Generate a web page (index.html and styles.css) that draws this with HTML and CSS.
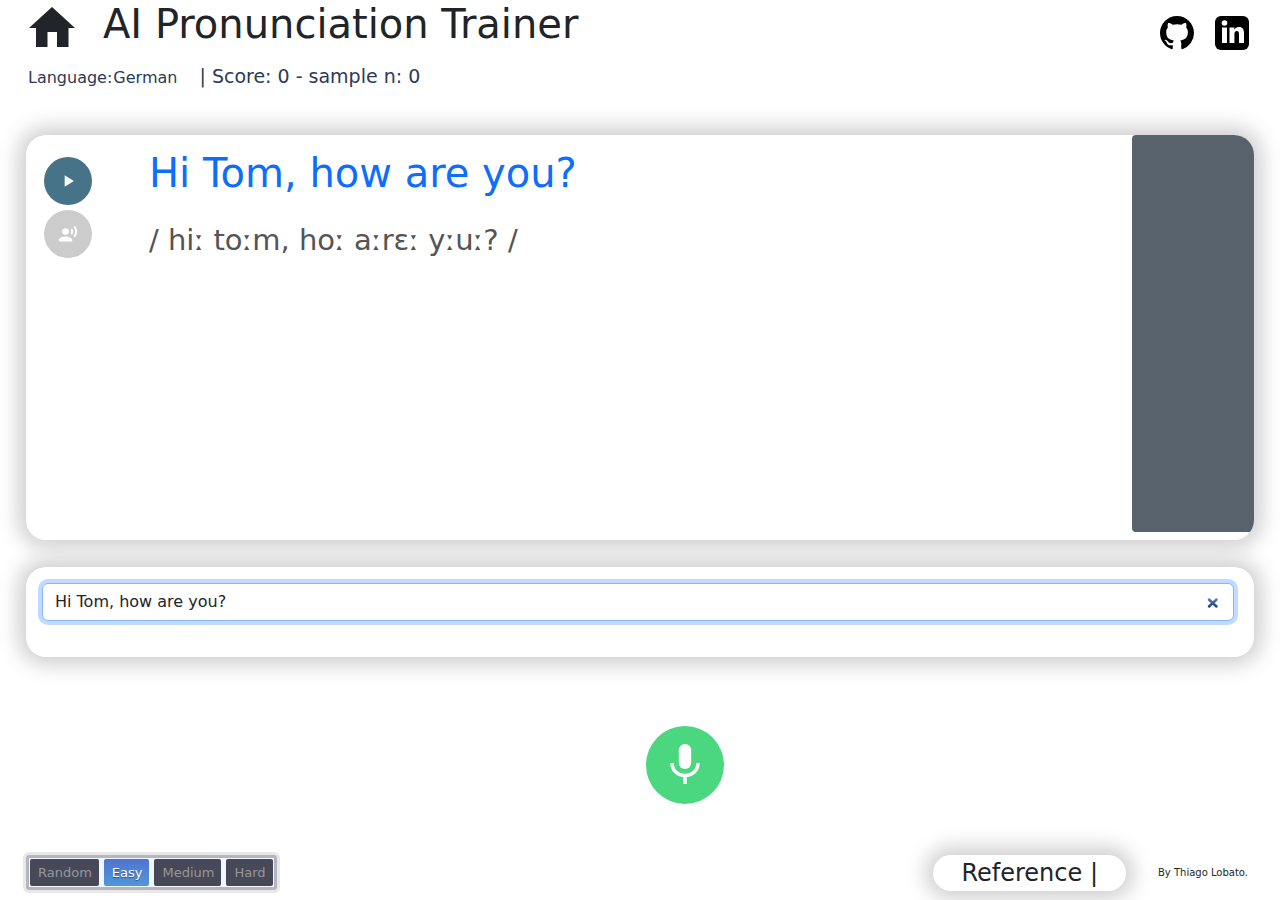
FILE: index.html
```html
<!DOCTYPE html>
<html lang="en">
<head>
<meta charset="utf-8">
<meta name="viewport" content="width=device-width, initial-scale=1">
<title>AI Pronunciation Trainer</title>
<link rel="stylesheet" href="styles.css">
</head>
<body>
<header class="header">
  <div class="title-row">
    <a class="home" href="#" aria-label="Home"><svg viewBox="0 0 46 40" width="46" height="40"><path d="M23 0 46 21H39.500V40H28V25H18.500V40H7V21H0Z"/></svg></a>
    <h1 class="title">AI Pronunciation Trainer</h1>
    <nav class="links">
      <a href="#" aria-label="GitHub"><svg viewBox="0 0 24 24" width="34" height="34"><path d="M12 0C5.370 0 0 5.370 0 12c0 5.310 3.435 9.795 8.205 11.385.6.105.825-.255.825-.57 0-.285-.015-1.230-.015-2.235-3.015.555-3.795-.735-4.035-1.410-.135-.345-.72-1.410-1.230-1.695-.42-.225-1.020-.78-.015-.795.945-.015 1.620.87 1.845 1.230 1.080 1.815 2.805 1.305 3.495.99.105-.78.42-1.305.765-1.605-2.670-.3-5.460-1.335-5.460-5.925 0-1.305.465-2.385 1.230-3.225-.12-.3-.54-1.530.12-3.180 0 0 1.005-.315 3.300 1.230.96-.27 1.980-.405 3-.405s2.040.135 3 .405c2.295-1.560 3.300-1.230 3.300-1.230.66 1.650.24 2.880.12 3.180.765.84 1.230 1.905 1.230 3.225 0 4.605-2.805 5.625-5.475 5.925.435.375.81 1.095.81 2.220 0 1.605-.015 2.895-.015 3.300 0 .315.225.69.825.57A12.020 12.020 0 0 0 24 12c0-6.630-5.370-12-12-12z"/></svg></a>
      <a href="#" aria-label="LinkedIn"><svg viewBox="0 0 34 34" width="34" height="34"><rect width="34" height="34" rx="6"/><g fill="#fff"><circle cx="9.500" cy="7" r="2.800"/><path d="M7 11.500h5V27H7zM14.500 11.500h4.800v2.200c.9-1.600 2.500-2.600 4.600-2.600 4 0 5.100 2.700 5.100 6.300V27h-5v-8.500c0-2-.3-3.500-2.100-3.500-1.900 0-2.500 1.500-2.500 3.500V27h-4.900z"/></g></svg></a>
    </nav>
  </div>
  <div class="status">
    <span>Language:</span><button class="language" type="button">German</button>
    <span class="score">| Score: 0 - sample n: 0</span>
  </div>
</header>
<main class="main">
  <section class="card practice">
    <div class="actions">
      <button class="round play" type="button" aria-label="Play reference"><svg viewBox="0 0 24 24" width="20" height="20"><path d="M8 5v14l11-7z"/></svg></button>
      <button class="round voice" type="button" aria-label="Play recording" disabled><svg viewBox="0 0 24 24" width="20" height="20"><circle cx="9" cy="9" r="4"/><path d="M9 15c-2.670 0-8 1.340-8 4v2h16v-2c0-2.660-5.330-4-8-4zM16.760 5.360l-1.680 1.690c.84 1.180.84 2.710 0 3.890l1.680 1.690c2.020-2.020 2.020-5.070 0-7.270zM20.070 2l-1.630 1.630c2.770 3.020 2.770 7.560 0 10.740L20.070 16c3.900-3.890 3.910-9.950 0-14z"/></svg></button>
    </div>
    <div class="texts">
      <p class="sentence">Hi Tom, how are you?</p>
      <p class="ipa">/ hiː toːm, hoː aːrɛː yːuː? /</p>
    </div>
    <button class="next" type="button" aria-label="Next sample"></button>
  </section>
  <section class="card entry">
    <div class="field">
      <input class="input" type="text" value="Hi Tom, how are you?" aria-label="Sentence">
      <button class="clear" type="button" aria-label="Clear"><svg viewBox="0 0 12 12" width="12" height="12"><defs><linearGradient id="ink" x1="0" y1="0" x2="0" y2="1"><stop offset="0" stop-color="#4a78c0"/><stop offset="1" stop-color="#24407f"/></linearGradient></defs><path d="M2 2.500l7.500 7M9.500 2.500l-7.500 7"/></svg></button>
    </div>
  </section>
  <button class="mic" type="button" aria-label="Record"><svg viewBox="0 0 32 42" width="32" height="42"><rect x="9.800" y="0" width="12.400" height="25" rx="6.200"/><path class="stroke" d="M3 19c0 7.500 5.800 12.500 13 12.500S29 26.500 29 19M16 31.500V40"/></svg></button>
</main>
<footer class="footer">
  <fieldset class="levels" aria-label="Difficulty">
    <label class="level"><input type="radio" name="level"><span>Random</span></label>
    <label class="level"><input type="radio" name="level" checked><span>Easy</span></label>
    <label class="level"><input type="radio" name="level"><span>Medium</span></label>
    <label class="level"><input type="radio" name="level"><span>Hard</span></label>
  </fieldset>
  <div class="credits">
    <a class="reference" href="#">Reference |</a>
    <span class="author">By Thiago Lobato.</span>
  </div>
</footer>
</body>
</html>
```
FILE: styles.css
```css
* { box-sizing: border-box; }
body {
  margin: 0;
  min-height: 100vh;
  display: flex;
  flex-direction: column;
  padding: 0 26px 9px;
  background: #fff;
  color: #212529;
  font: 16px/24px "DejaVu Sans", sans-serif;
}
button { border: 0; padding: 0; font: inherit; color: inherit; cursor: pointer; }
h1, p { margin: 0; font-weight: 400; }
svg { display: block; }

.title-row { display: flex; align-items: flex-start; }
.home { margin: 7px 28px 0 3px; fill: #212529; }
.title { font-size: 40px; line-height: 48px; }
.links { display: flex; gap: 21px; margin: 16px 5px 0 auto; }
.status { display: flex; align-items: baseline; margin-top: 14px; padding-left: 2px; color: #2b3b56; }
.language { background: none; margin-left: 1px; }
.score { margin-left: 22px; font-size: 19px; }

.main { flex: 1; display: flex; flex-direction: column; gap: 27px; margin-top: 45px; }
.card { background: #fff; border-radius: 20px; box-shadow: 0 0 20px 8px #d0d0d0; }
.practice { display: flex; min-height: 405px; overflow: hidden; }
.actions { display: flex; flex-direction: column; gap: 5px; padding: 22px 0 0 18px; }
.round { display: grid; place-items: center; width: 48px; height: 48px; border-radius: 50%; fill: #fff; }
.play { background: #467387; }
.voice { background: #ccc; }
.texts { flex: 1; padding: 14px 0 0 57px; }
.sentence { font-size: 40px; line-height: 48px; color: #0d6efd; }
.ipa { margin-top: 23px; font-size: 29px; line-height: 40px; color: #555; }
.next { width: 122px; margin-bottom: 8px; border-radius: 4px; background: #58626c; }

.entry { min-height: 90px; padding: 16px 20px 0 16px; }
.field { position: relative; }
.input {
  display: block;
  width: 100%;
  height: 38px;
  padding: 0 40px 2px 12px;
  border: 1px solid #86b7fe;
  border-radius: 6px;
  outline: 0;
  box-shadow: 0 0 0 4px #c2daff;
  font: inherit;
  color: #212529;
}
.clear { position: absolute; top: 14px; right: 15px; background: none; }
.clear svg { fill: none; stroke: url(#ink); stroke-width: 2.500; stroke-linecap: round; }

.mic { display: grid; place-items: center; align-self: center; width: 78px; height: 78px; margin: 42px 0 0 90px; border-radius: 50%; background: #4bd77f; fill: #fff; }
.mic .stroke { fill: none; stroke: #fff; stroke-width: 3.500; }

.footer { display: flex; align-items: center; justify-content: space-between; }
.levels {
  display: flex;
  gap: 5px;
  margin: 0 0 1px;
  padding: 1px;
  border: 3px solid #b5b5bf;
  border-radius: 3px;
  background: #f4f6ff;
  box-shadow: 0 0 0 3px #e8e8e8;
}
.level { position: relative; cursor: pointer; }
.level input { position: absolute; inset: 0; margin: 0; opacity: 0; }
.level span { display: block; padding: 0 7px 0 8px; border-radius: 2px; background: #474959; color: #95969c; font-size: 13px; line-height: 27px; }
.level input:checked + span { background: linear-gradient(#4f74d0, #4f97da); color: #fff; text-shadow: 0 1px 1px #0006; }
.credits { display: flex; align-items: center; gap: 32px; padding-right: 6px; }
.reference { padding: 0 28px; border-radius: 20px; background: #fff; box-shadow: 0 0 20px 8px #d0d0d0; color: inherit; font-size: 24px; line-height: 36px; text-decoration: none; }
.author { font-size: 10px; }
```
